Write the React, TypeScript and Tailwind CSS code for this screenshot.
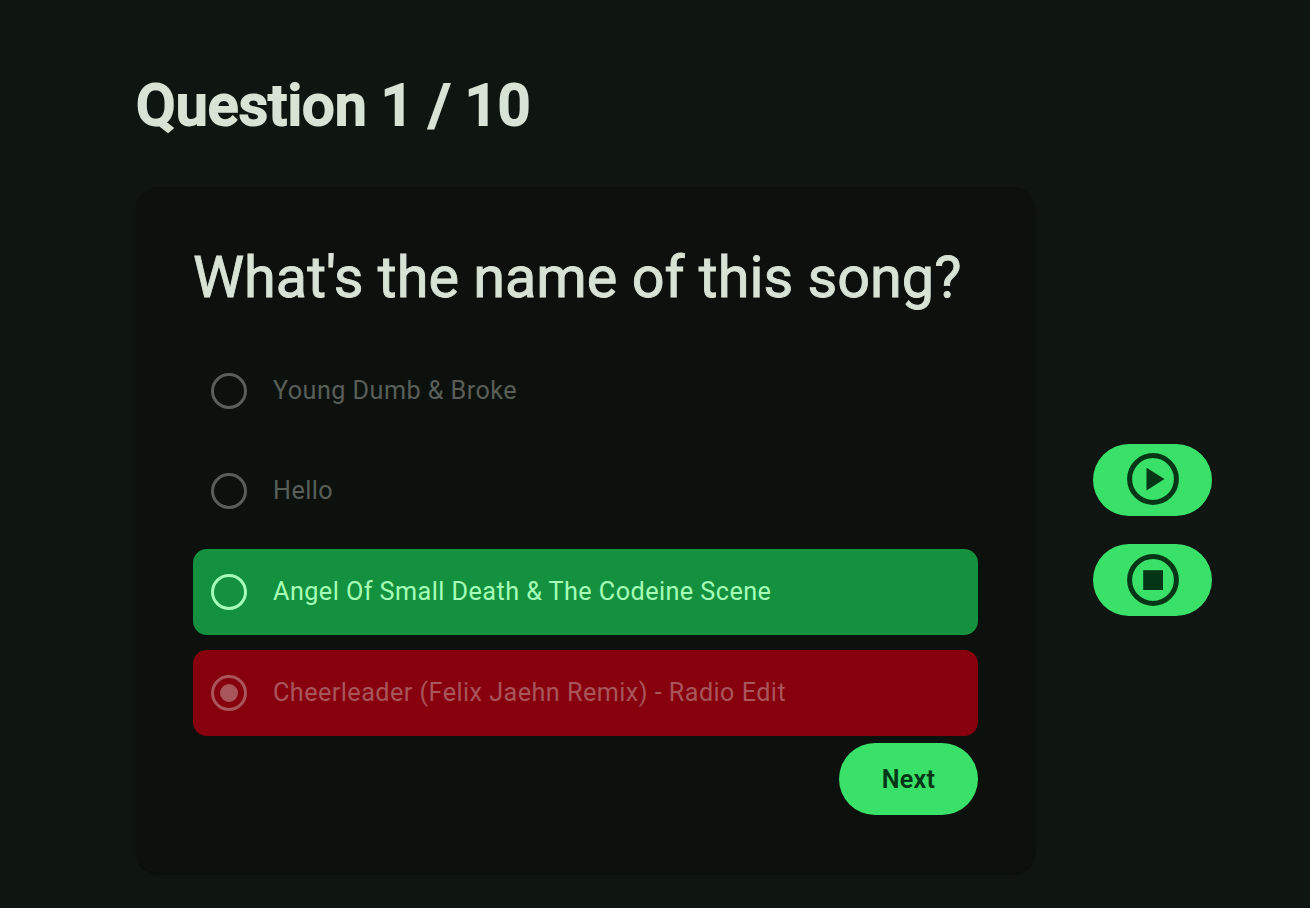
import React from "react";

type Status = "idle" | "correct" | "wrong";

const answers: { label: string; status: Status; selected: boolean }[] = [
  { label: "Young Dumb & Broke", status: "idle", selected: false },
  { label: "Hello", status: "idle", selected: false },
  { label: "Angel Of Small Death & The Codeine Scene", status: "correct", selected: false },
  { label: "Cheerleader (Felix Jaehn Remix) - Radio Edit", status: "wrong", selected: true },
];

const statusClass: Record<Status, string> = {
  idle: "text-[#595e58]",
  correct: "bg-[#14913f] text-[#a5ffb6]",
  wrong: "bg-[#86000d] text-[#a8555b]",
};

function Radio({ selected }: { selected: boolean }) {
  return (
    <span className="flex size-9 items-center justify-center rounded-full border-[3px] border-current">
      {selected && <span className="size-[18px] rounded-full bg-current" />}
    </span>
  );
}

export default function App() {
  return (
    <div className="flex h-[908px] w-[1310px] overflow-hidden bg-[#0f1511] pl-[136px] font-['Roboto',sans-serif] text-[#d8e2d5] antialiased">
      <main className="w-[899px] shrink-0">
        <h1 className="mt-[70px] text-[57.6px] leading-[72px] font-medium whitespace-nowrap [-webkit-text-stroke:2px_currentColor]">Question 1 / 10</h1>
        <section className="mt-[45px] h-[686px] rounded-[22px] bg-[#0c110d] px-[57px] pt-[54px] shadow-[0_2px_2px_rgba(0,0,0,0.3)]">
          <h2 className="text-[57.6px] leading-[73px] whitespace-nowrap [-webkit-text-stroke:0.9px_currentColor]">What's the name of this song?</h2>
          <ul className="mt-[33.4px] flex flex-col gap-[14.4px]">
            {answers.map((a) => (
              <li key={a.label} className={`flex h-[86.4px] items-center gap-[26px] rounded-[14px] pl-[18px] ${statusClass[a.status]}`}>
                <Radio selected={a.selected} />
                <span className="text-[25.2px] tracking-[0.45px] whitespace-nowrap">{a.label}</span>
              </li>
            ))}
          </ul>
          <div className="mt-[7px] flex justify-end">
            <button className="h-[72px] w-[139px] rounded-full bg-[#3ae168] pt-[2px] text-[25.2px] font-semibold tracking-[0.18px] text-[#053517]">Next</button>
          </div>
        </section>
      </main>
      <aside className="ml-[58px] flex flex-col gap-7 pt-[444px]">
        <button className="flex h-[72px] w-[119px] items-center justify-center rounded-full bg-[#3ae168] pb-[3px] text-[#053517]">
          <svg width="52" height="52" viewBox="0 0 52 52">
            <circle cx="26" cy="26" r="23.4" fill="none" stroke="currentColor" strokeWidth="5" />
            <path d="M19.5 14.8v22.6L37.5 26z" fill="currentColor" />
          </svg>
        </button>
        <button className="flex h-[72px] w-[119px] items-center justify-center rounded-full bg-[#3ae168] pb-px text-[#053517]">
          <svg width="52" height="52" viewBox="0 0 52 52">
            <circle cx="26" cy="26" r="23.4" fill="none" stroke="currentColor" strokeWidth="5" />
            <path d="M16.2 16.2h19.8v19.8H16.2z" fill="currentColor" />
          </svg>
        </button>
      </aside>
    </div>
  );
}
